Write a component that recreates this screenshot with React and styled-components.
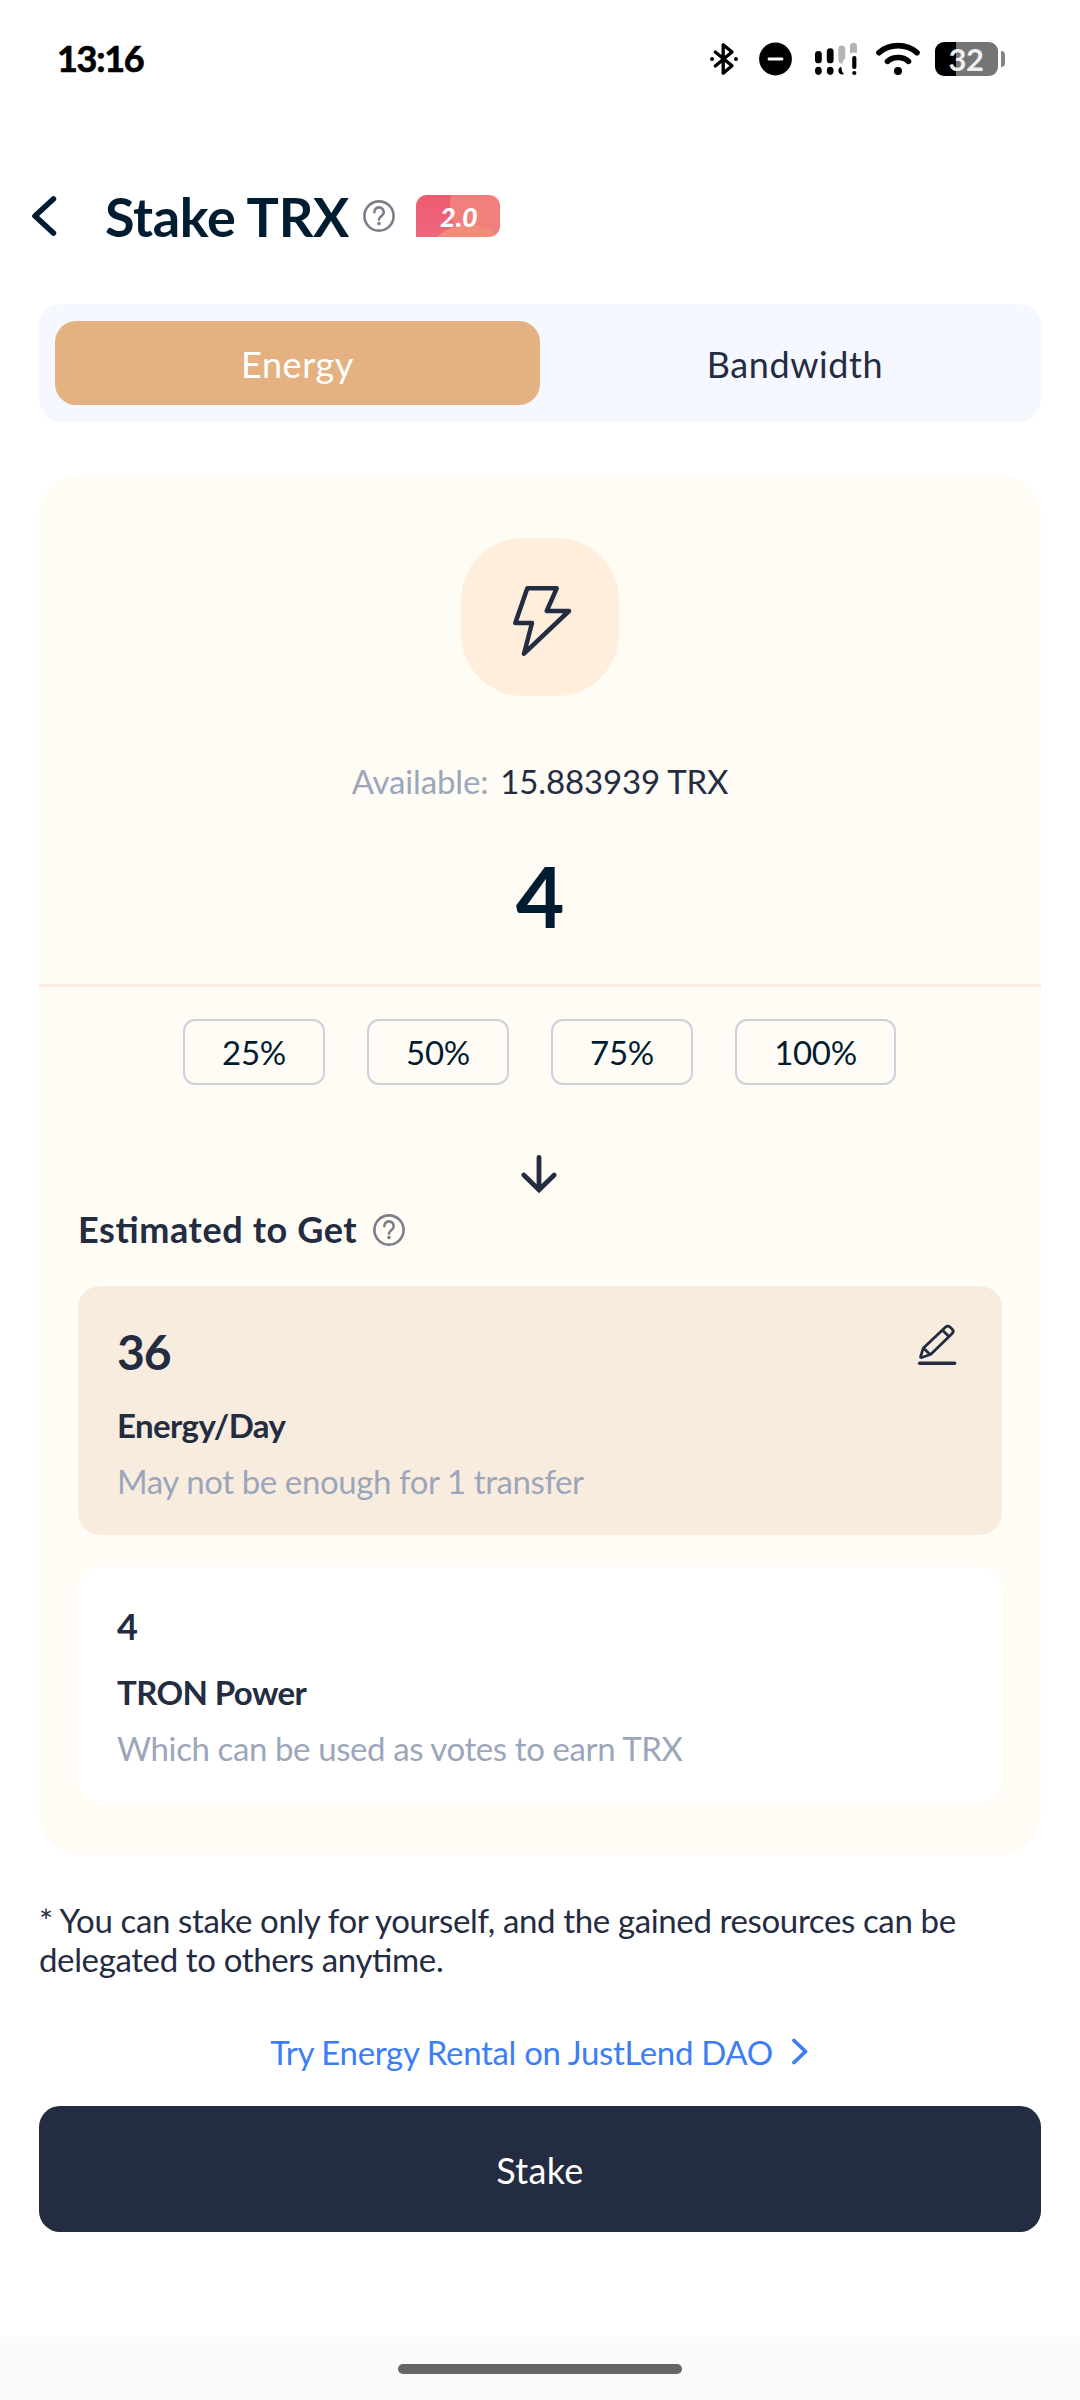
import React from "react";
import styled, { createGlobalStyle } from "styled-components";

const GlobalStyle = createGlobalStyle`
  * {
    box-sizing: border-box;
  }

  body {
    margin: 0;
    background-color: #ffffff;
    font-family: Lato, "Open Sans", sans-serif;
    font-feature-settings: "liga" 1;
    color: #242c41;
  }

  svg {
    display: block;
    flex-shrink: 0;
  }
`;

const Screen = styled.div`
  width: 1080px;
  height: 2400px;
  display: flex;
  flex-direction: column;
  overflow: hidden;
`;

const StatusBar = styled.header`
  height: 118px;
  padding: 0 75px 0 57px;
  display: flex;
  justify-content: space-between;
  align-items: center;
`;

const Clock = styled.span`
  margin-top: -2px;
  font-size: 36px;
  font-weight: 700;
  line-height: 44px;
  letter-spacing: -1.3px;
  color: #000000;
  -webkit-text-stroke: 0.7px #000000;
`;

const StatusIcons = styled.div`
  display: flex;
  align-items: center;
`;

const StatusIcon = styled.svg`
  height: 34px;
  margin-left: ${(props) => props.$gap || 0}px;
`;

const Battery = styled.div`
  display: flex;
  align-items: center;
  gap: 3px;
  margin-left: 15px;
`;

const BatteryBody = styled.div`
  width: 63px;
  height: 34px;
  border-radius: 9px;
  background: linear-gradient(90deg, #000000 21px, #757575 21px);
  display: flex;
  justify-content: center;
  align-items: center;
  padding: 0 15px 1px 14px;
  font-size: 31px;
  font-weight: 700;
  line-height: 32px;
  letter-spacing: -0.5px;
  color: #efefef;
`;

const BatteryTip = styled.div`
  width: 4px;
  height: 16px;
  border-radius: 0 4px 4px 0;
  background-color: #858585;
`;

const TitleBar = styled.div`
  height: 66px;
  margin-top: 65px;
  padding-left: 30px;
  display: flex;
  align-items: center;
`;

const Title = styled.h1`
  margin: 0 14px 0 45px;
  font-size: 54px;
  font-weight: 700;
  line-height: 65px;
  letter-spacing: -0.35px;
  color: #001c31;
`;

const Version = styled.div`
  width: 84px;
  height: 42px;
  margin-left: 21px;
  border-radius: 11px 11px 11px 0;
  background: radial-gradient(circle at 52px 76px, #f18c78 46px, transparent 46.5px),
    radial-gradient(circle at 76px 10px, #f1807c 42px, transparent 42.5px),
    linear-gradient(180deg, #ed5a70, #ee687c);
  display: flex;
  justify-content: center;
  align-items: center;
  padding: 1px 0 0 2px;
  font-size: 27px;
  font-weight: 900;
  font-style: italic;
  color: #ffffff;
`;

const Tabs = styled.div`
  height: 118px;
  margin: 55px 39px 0;
  padding: 17px 0 17px 16px;
  border-radius: 22px;
  background-color: #f5f8ff;
  display: flex;
`;

const Tab = styled.div`
  width: ${(props) => (props.$active ? "485px" : "auto")};
  flex: ${(props) => (props.$active ? "none" : "1")};
  padding-top: 2px;
  padding-left: ${(props) => (props.$active ? "0" : "9px")};
  border-radius: 21px;
  background-color: ${(props) => (props.$active ? "#e3b280" : "transparent")};
  color: ${(props) => (props.$active ? "#ffffff" : "#242c41")};
  font-size: 36px;
  letter-spacing: 0.6px;
  display: flex;
  justify-content: center;
  align-items: center;
`;

const Card = styled.section`
  height: 1380px;
  margin: 53px 39px 0;
  padding-top: 63px;
  border-radius: 42px;
  background-color: #fffcf6;
  display: flex;
  flex-direction: column;
  align-items: center;
`;

const BoltBox = styled.div`
  width: 158px;
  height: 158px;
  border-radius: 62px;
  background-color: #ffeedb;
`;

const Available = styled.div`
  margin-top: 65px;
  height: 40px;
  display: flex;
  gap: 12px;
  font-size: 33px;
  line-height: 40px;
  letter-spacing: -0.15px;
`;

const Muted = styled.span`
  color: #9ca6bb;
`;

const Amount = styled.div`
  width: 100%;
  height: 142px;
  margin-top: 44px;
  border-bottom: 3px solid #f9ecde;
  text-align: center;
  font-size: 84px;
  font-weight: 700;
  line-height: 101px;
  color: #001c31;
`;

const Percents = styled.div`
  margin-top: 32px;
  padding-right: 1px;
  display: flex;
  gap: 42px;
`;

const Percent = styled.div`
  width: ${(props) => (props.$wide ? "161px" : "142px")};
  height: 66px;
  border: 2px solid #ccd1dc;
  border-radius: 12px;
  display: flex;
  justify-content: center;
  align-items: center;
  font-size: 33px;
  letter-spacing: -0.3px;
  color: #001c31;
`;

const ArrowRow = styled.div`
  margin-top: 69px;
  padding-right: 2px;
`;

const Estimated = styled.div`
  width: 924px;
  height: 43px;
  margin-top: 14px;
  display: flex;
  align-items: center;
  gap: 16px;
  font-size: 36px;
  font-weight: 700;
  line-height: 43px;
  letter-spacing: 0.6px;
`;

const Result = styled.div`
  width: 924px;
  height: ${(props) => (props.$highlight ? "249px" : "235px")};
  margin-top: ${(props) => (props.$highlight ? "35px" : "32px")};
  padding: 37px 45px 0 39px;
  border-radius: 22px;
  background-color: ${(props) => (props.$highlight ? "#f8ecdf" : "#ffffff")};
  display: flex;
  justify-content: space-between;
`;

const ResultValue = styled.div`
  font-size: ${(props) => (props.$large ? "48px" : "36px")};
  font-weight: 700;
  line-height: ${(props) => (props.$large ? "58px" : "44px")};
  letter-spacing: ${(props) => (props.$large ? "-1px" : "0")};
`;

const ResultName = styled.div`
  margin-top: 24px;
  font-size: 33px;
  font-weight: 700;
  line-height: 40px;
  letter-spacing: -0.6px;
`;

const ResultHint = styled.div`
  margin-top: 16px;
  font-size: 33px;
  line-height: 40px;
  letter-spacing: -0.4px;
  color: #9ca6bb;
`;

const Note = styled.p`
  height: 78px;
  margin: 46px 39px 0;
  font-size: 33px;
  line-height: 39px;
  letter-spacing: -0.37px;
`;

const RentalLink = styled.a`
  height: 40px;
  margin-top: 53px;
  padding-right: 1px;
  display: flex;
  justify-content: center;
  align-items: center;
  gap: 18px;
  font-size: 33px;
  line-height: 40px;
  letter-spacing: -0.34px;
  color: #3c7ef5;
`;

const StakeButton = styled.button`
  height: 126px;
  margin: 34px 39px 0;
  padding: 2px 0 0;
  border: none;
  border-radius: 21px;
  background-color: #242c41;
  font-family: inherit;
  font-size: 36px;
  letter-spacing: 0.3px;
  color: #ffffff;
`;

const NavBar = styled.footer`
  height: 63px;
  margin-top: auto;
  padding-top: 27px;
  background-color: #fafafa;
  display: flex;
  justify-content: center;
`;

const NavHandle = styled.div`
  width: 284px;
  height: 10px;
  border-radius: 5px;
  background-color: #656565;
`;

const HelpIcon = () => (
  <svg width="32" height="32" viewBox="0 0 32 32" fill="none" stroke="#7d7d8b">
    <circle cx="16" cy="16" r="14.6" strokeWidth="2.6" />
    <path
      d="M11.3 12.2a4.7 4.7 0 1 1 7.8 3.4c-1.9 1.5-3.1 2-3.1 4"
      strokeWidth="2.6"
      strokeLinecap="round"
    />
    <circle cx="16" cy="23.6" r="1.8" fill="#7d7d8b" stroke="none" />
  </svg>
);

const BluetoothIcon = () => (
  <StatusIcon width="28" viewBox="0 0 28 34" fill="none">
    <path
      d="M5.3 10 22 23.8 13.2 31.3V2.7L22 10 5.3 24"
      stroke="#000"
      strokeWidth="3.3"
      strokeLinecap="round"
      strokeLinejoin="round"
    />
    <circle cx="2" cy="17" r="2" fill="#000" />
    <circle cx="26" cy="17" r="2" fill="#000" />
  </StatusIcon>
);

const SilentIcon = () => (
  <StatusIcon $gap={21} width="33" viewBox="0 0 33 34">
    <circle cx="16.5" cy="17" r="16.4" />
    <rect x="8.6" y="15.6" width="15.8" height="2.9" rx="1.4" fill="#fff" />
  </StatusIcon>
);

const SignalIcon = () => (
  <StatusIcon $gap={23} width="43" viewBox="0 0 43 34">
    <rect x="0" y="9" width="6.8" height="12.3" rx="3.4" />
    <ellipse cx="3.4" cy="28.8" rx="3.4" ry="4.1" />
    <rect x="11.8" y="6.3" width="6.8" height="15" rx="3.4" />
    <ellipse cx="15.2" cy="28.8" rx="3.4" ry="4.1" />
    <path
      d="M23.4 7a3.4 3.4 0 0 1 6.8 0v9.5c-2 1.6-2.6 3.6-3 5.4-2.2 0-3.8-1.5-3.8-3.6z"
      fill="#b3b3b3"
    />
    <path d="M26.2 24.8c.3 3.4 1.4 5.8 2.6 7.4-2.8 1-5.4-.8-5.4-3.4 0-2 1.1-3.5 2.8-4z" />
    <path d="M35 4.3a3.4 3.4 0 0 1 7 0v6.5h-4c-1.2 0-2 .3-3 1z" fill="#b3b3b3" />
    <rect x="37.2" y="14" width="4.2" height="13" rx="1.9" />
    <circle cx="39.3" cy="31" r="2.1" />
  </StatusIcon>
);

const WifiIcon = () => (
  <StatusIcon
    $gap={18}
    width="44"
    viewBox="0 0 44 34"
    fill="none"
    stroke="#000"
    strokeWidth="5.6"
    strokeLinecap="round"
  >
    <path d="M3 10.7c10.5-9.4 27.5-9.4 38 0" />
    <path d="M11.5 19.3c5.8-5 15.2-5 21 0" />
    <circle cx="22" cy="29" r="4" fill="#000" stroke="none" />
  </StatusIcon>
);

const BackIcon = () => (
  <svg width="30" height="44" viewBox="0 0 30 44" fill="none">
    <path
      d="M23.4 5 5 22 23.4 39"
      stroke="#001c31"
      strokeWidth="5.6"
      strokeLinecap="round"
      strokeLinejoin="round"
    />
  </svg>
);

const BoltIcon = () => (
  <svg width="158" height="158" viewBox="0 0 158 158" fill="none">
    <path
      d="M66.3 50.3H95.7L85.7 73H108L63 115.7 71 85H54.3z"
      stroke="#242c41"
      strokeWidth="4.5"
      strokeLinejoin="round"
    />
  </svg>
);

const DownIcon = () => (
  <svg width="38" height="40" viewBox="0 0 38 40" fill="none">
    <path
      d="M19 3.3V36M3.8 21 19 36 34.2 21"
      stroke="#242c41"
      strokeWidth="4.8"
      strokeLinecap="round"
    />
  </svg>
);

const EditIcon = () => (
  <svg width="40" height="46" viewBox="0 0 40 46" fill="none">
    <path
      d="M3.6 33.6 6.2 25.3 28.6 4.1q2.3-2 4.4 0l2.2 2.1q2 2.3 0 4.4L13.9 31.2 4.8 34.5q-1.5.3-1.2-.9zM25.5 7.200l6.900 6.900M6.700 25.300l6.400 6.100"
      stroke="#242c41"
      strokeWidth="2.8"
      strokeLinejoin="round"
    />
    <path d="M2.7 40.3h34.8" stroke="#242c41" strokeWidth="3.6" strokeLinecap="round" />
  </svg>
);

const NextIcon = () => (
  <svg width="18" height="28" viewBox="0 0 18 28" fill="none">
    <path
      d="M3 2.5 14.5 13.5 3 24.5"
      stroke="#3c7ef5"
      strokeWidth="3.8"
      strokeLinecap="round"
      strokeLinejoin="round"
    />
  </svg>
);

const PERCENTS = [25, 50, 75, 100];

const App = () => {
  return (
    <>
      <GlobalStyle />
      <Screen>
        <StatusBar>
          <Clock>13:16</Clock>
          <StatusIcons>
            <BluetoothIcon />
            <SilentIcon />
            <SignalIcon />
            <WifiIcon />
            <Battery>
              <BatteryBody>32</BatteryBody>
              <BatteryTip />
            </Battery>
          </StatusIcons>
        </StatusBar>
        <TitleBar>
          <BackIcon />
          <Title>Stake TRX</Title>
          <HelpIcon />
          <Version>2.0</Version>
        </TitleBar>
        <Tabs>
          <Tab $active>Energy</Tab>
          <Tab>Bandwidth</Tab>
        </Tabs>
        <Card>
          <BoltBox>
            <BoltIcon />
          </BoltBox>
          <Available>
            <Muted>Available:</Muted>
            <span>15.883939 TRX</span>
          </Available>
          <Amount>4</Amount>
          <Percents>
            {PERCENTS.map((value) => (
              <Percent key={value} $wide={value === 100}>
                {value}%
              </Percent>
            ))}
          </Percents>
          <ArrowRow>
            <DownIcon />
          </ArrowRow>
          <Estimated>
            Estimated to Get
            <HelpIcon />
          </Estimated>
          <Result $highlight>
            <div>
              <ResultValue $large>36</ResultValue>
              <ResultName>Energy/Day</ResultName>
              <ResultHint>May not be enough for 1 transfer</ResultHint>
            </div>
            <EditIcon />
          </Result>
          <Result>
            <div>
              <ResultValue>4</ResultValue>
              <ResultName>TRON Power</ResultName>
              <ResultHint>Which can be used as votes to earn TRX</ResultHint>
            </div>
          </Result>
        </Card>
        <Note>
          * You can stake only for yourself, and the gained resources can be
          delegated to others anytime.
        </Note>
        <RentalLink>
          Try Energy Rental on JustLend DAO
          <NextIcon />
        </RentalLink>
        <StakeButton>Stake</StakeButton>
        <NavBar>
          <NavHandle />
        </NavBar>
      </Screen>
    </>
  );
};

export default App;
